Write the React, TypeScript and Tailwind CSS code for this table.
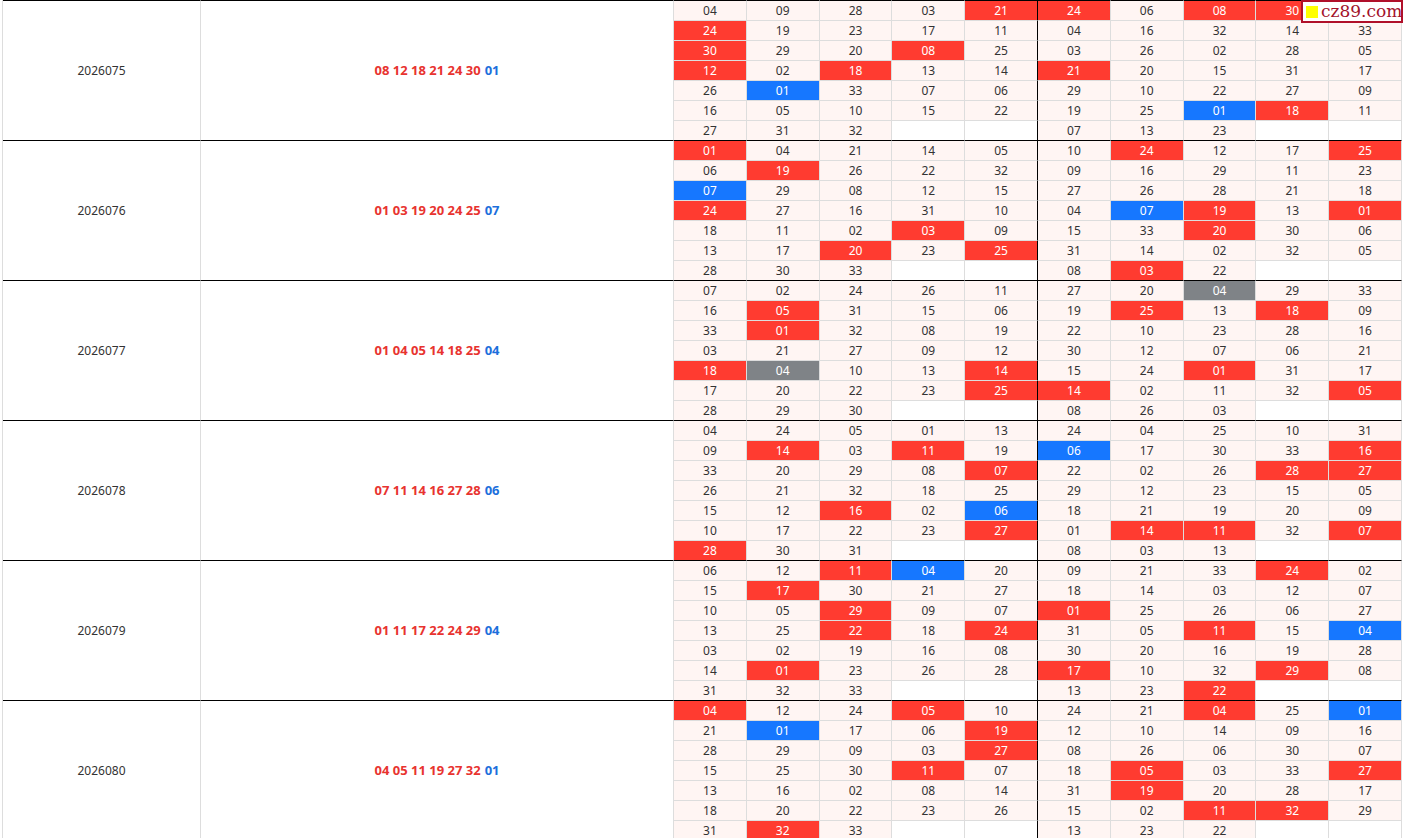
type Block = { issue: string; reds: string; blue: string; rows: string[] };

// suffix: r = red hit, b = blue hit, g = grey, '-' = empty cell, 'x' = red cell hidden under the logo
const blocks: Block[] = [
  {
    issue: '2026075',
    reds: '08 12 18 21 24 30',
    blue: '01',
    rows: [
      '04 09 28 03 21r 24r 06 08r 30r x',
      '24r 19 23 17 11 04 16 32 14 33',
      '30r 29 20 08r 25 03 26 02 28 05',
      '12r 02 18r 13 14 21r 20 15 31 17',
      '26 01b 33 07 06 29 10 22 27 09',
      '16 05 10 15 22 19 25 01b 18r 11',
      '27 31 32 - - 07 13 23 - -',
    ],
  },
  {
    issue: '2026076',
    reds: '01 03 19 20 24 25',
    blue: '07',
    rows: [
      '01r 04 21 14 05 10 24r 12 17 25r',
      '06 19r 26 22 32 09 16 29 11 23',
      '07b 29 08 12 15 27 26 28 21 18',
      '24r 27 16 31 10 04 07b 19r 13 01r',
      '18 11 02 03r 09 15 33 20r 30 06',
      '13 17 20r 23 25r 31 14 02 32 05',
      '28 30 33 - - 08 03r 22 - -',
    ],
  },
  {
    issue: '2026077',
    reds: '01 04 05 14 18 25',
    blue: '04',
    rows: [
      '07 02 24 26 11 27 20 04g 29 33',
      '16 05r 31 15 06 19 25r 13 18r 09',
      '33 01r 32 08 19 22 10 23 28 16',
      '03 21 27 09 12 30 12 07 06 21',
      '18r 04g 10 13 14r 15 24 01r 31 17',
      '17 20 22 23 25r 14r 02 11 32 05r',
      '28 29 30 - - 08 26 03 - -',
    ],
  },
  {
    issue: '2026078',
    reds: '07 11 14 16 27 28',
    blue: '06',
    rows: [
      '04 24 05 01 13 24 04 25 10 31',
      '09 14r 03 11r 19 06b 17 30 33 16r',
      '33 20 29 08 07r 22 02 26 28r 27r',
      '26 21 32 18 25 29 12 23 15 05',
      '15 12 16r 02 06b 18 21 19 20 09',
      '10 17 22 23 27r 01 14r 11r 32 07r',
      '28r 30 31 - - 08 03 13 - -',
    ],
  },
  {
    issue: '2026079',
    reds: '01 11 17 22 24 29',
    blue: '04',
    rows: [
      '06 12 11r 04b 20 09 21 33 24r 02',
      '15 17r 30 21 27 18 14 03 12 07',
      '10 05 29r 09 07 01r 25 26 06 27',
      '13 25 22r 18 24r 31 05 11r 15 04b',
      '03 02 19 16 08 30 20 16 19 28',
      '14 01r 23 26 28 17r 10 32 29r 08',
      '31 32 33 - - 13 23 22r - -',
    ],
  },
  {
    issue: '2026080',
    reds: '04 05 11 19 27 32',
    blue: '01',
    rows: [
      '04r 12 24 05r 10 24 21 04r 25 01b',
      '21 01b 17 06 19r 12 10 14 09 16',
      '28 29 09 03 27r 08 26 06 30 07',
      '15 25 30 11r 07 18 05r 03 33 27r',
      '13 16 02 08 14 31 19r 20 28 17',
      '18 20 22 23 26 15 02 11r 32r 29',
      '31 32r 33 - - 13 23 22 - -',
    ],
  },
];

function Cell({ value, row, col }: { value: string; row: number; col: number }) {
  const mark = value.slice(-1);
  const text = value === '-' || value === 'x' ? '' : value.replace(/[rbg]$/, '');

  let tone = 'bg-[#fff5f3] text-[#333]';
  if (value === '-') tone = 'bg-white';
  else if (mark === 'r' || mark === 'x') tone = 'bg-[#ff3b30] text-white';
  else if (mark === 'b') tone = 'bg-[#1677ff] text-white';
  else if (mark === 'g') tone = 'bg-[#7f8387] text-white';

  return (
    <div
      className={`h-5 flex items-center justify-center border-t border-r ${
        row === 0 ? 'border-t-black' : 'border-t-[#ddd]'
      } ${col === 4 ? 'border-r-black' : 'border-r-[#ddd]'} ${tone}`}
    >
      {text}
    </div>
  );
}

function IssueBlock({ block }: { block: Block }) {
  return (
    <div className="flex h-[140px]">
      <div className="w-[198px] flex items-center justify-center border-t border-r border-t-black border-r-[#ddd]">
        {block.issue}
      </div>

      <div className="w-[473px] flex items-center justify-center border-t border-r border-t-black border-r-[#ddd] text-[13px] font-bold">
        <span className="text-[#e8332f]">{block.reds}</span>
        <span className="text-[#1d6fdc] ml-[4px]">{block.blue}</span>
      </div>

      <div className="w-[728px] grid grid-cols-10">
        {block.rows.map((row, r) =>
          row.split(' ').map((v, c) => <Cell key={`${r}-${c}`} value={v} row={r} col={c} />),
        )}
      </div>
    </div>
  );
}

export default function App() {
  return (
    <div className="relative w-[1405px] h-[838px] overflow-hidden bg-white text-[12px] text-[#333] font-['Noto_Sans',sans-serif]">
      <div className="ml-[2px] w-[1400px] border-l border-[#ddd]">
        {blocks.map((block) => (
          <IssueBlock key={block.issue} block={block} />
        ))}
      </div>

      <div className="absolute top-0 right-[2px] w-[102px] h-[23px] flex items-center gap-[3px] pl-[3px] bg-white border-2 border-[#b0102a]">
        <span className="w-[12px] h-[12px] bg-[#ffff00] shrink-0" />
        <span className="font-['DejaVu_Serif',serif] text-[17px] leading-none text-[#a3122b]">cz89.com</span>
      </div>
    </div>
  );
}
